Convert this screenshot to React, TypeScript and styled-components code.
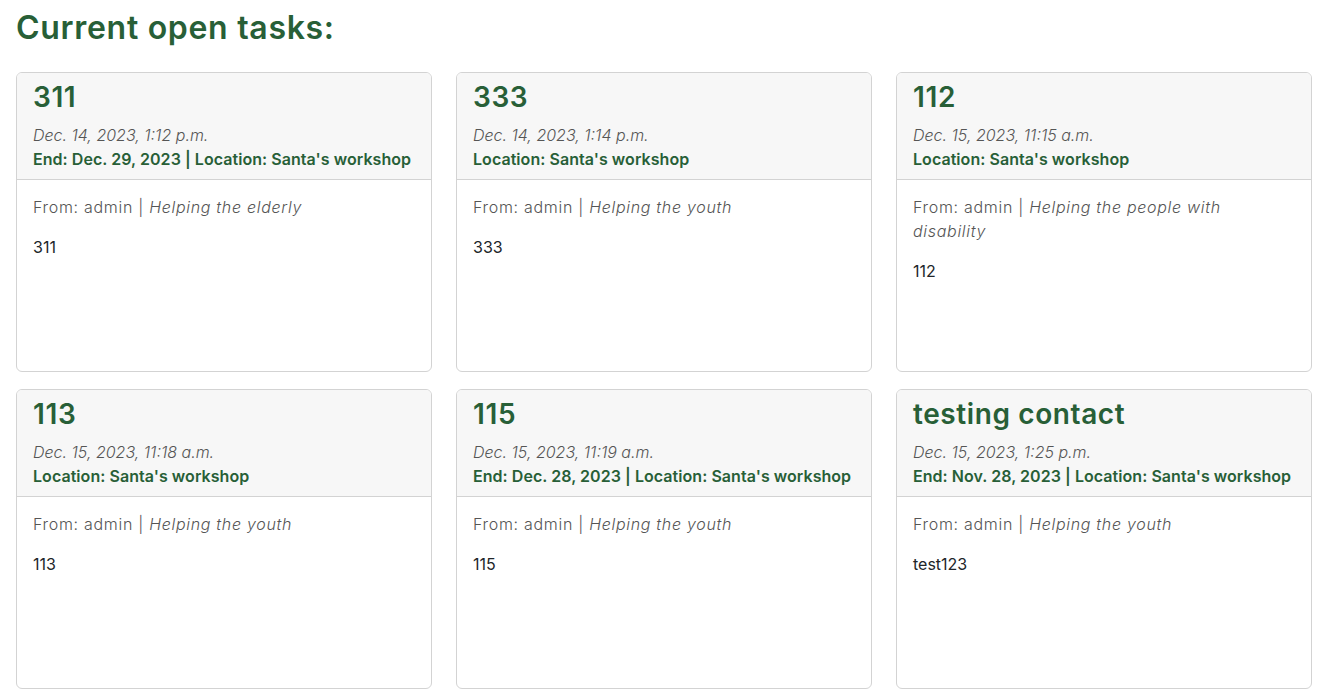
import React from "react";
import styled, { createGlobalStyle } from "styled-components";

const GlobalStyle = createGlobalStyle`
  html, body { margin: 0; padding: 0; background: #ffffff; }
  body { font-family: "Inter", "Liberation Sans", sans-serif; color: #212529; }
  * { box-sizing: border-box; }
`;

const Page = styled.main`
  padding: 8px 25px 16px 16px;
`;

const Heading = styled.h2`
  font-family: "Inter", "Liberation Sans", sans-serif;
  font-weight: 600;
  font-size: 32px;
  line-height: 1.2;
  letter-spacing: 0.7px;
  color: #285f37;
  margin: 1px 0 25px 0;
`;

const Grid = styled.div`
  display: grid;
  grid-template-columns: repeat(3, 1fr);
  column-gap: 24px;
  row-gap: 17px;
`;

const Card = styled.article`
  height: 300px;
  border: 1px solid #d3d3d3;
  border-radius: 6px;
  overflow: hidden;
  display: flex;
  flex-direction: column;
  background: #fff;
`;

const CardHeader = styled.header`
  background: #f7f7f7;
  border-bottom: 1px solid #d3d3d3;
  padding: 8px 16px 8px 16px;
`;

const Title = styled.h3`
  font-family: "Inter", "Liberation Sans", sans-serif;
  font-weight: 600;
  font-size: 28px;
  line-height: 1.2;
  letter-spacing: 0.6px;
  color: #285f37;
  margin: 0 0 8px 0;
`;

const DateLine = styled.div`
  font-size: 16px;
  line-height: 24px;
  font-style: italic;
  font-weight: 300;
  color: #555;
`;

const MetaLine = styled.div`
  font-size: 16px;
  line-height: 24px;
  font-weight: 600;
  letter-spacing: 0.05px;
  color: #285f37;
`;

const CardBody = styled.div`
  padding: 15px 16px 16px 16px;
  font-size: 16px;
  line-height: 24px;
`;

const FromLine = styled.p`
  margin: 0 0 16px 0;
  font-weight: 300;
  letter-spacing: 0.7px;
  color: #555;
`;

const Category = styled.em`
  font-style: italic;
`;

const Description = styled.p`
  margin: 0;
  font-weight: 400;
  color: #212529;
`;

type Task = {
  title: string;
  created: string;
  end?: string;
  location: string;
  from: string;
  category: string;
  description: string;
};

const tasks: Task[] = [
  { title: "311", created: "Dec. 14, 2023, 1:12 p.m.", end: "Dec. 29, 2023", location: "Santa's workshop", from: "admin", category: "Helping the elderly", description: "311" },
  { title: "333", created: "Dec. 14, 2023, 1:14 p.m.", location: "Santa's workshop", from: "admin", category: "Helping the youth", description: "333" },
  { title: "112", created: "Dec. 15, 2023, 11:15 a.m.", location: "Santa's workshop", from: "admin", category: "Helping the people with disability", description: "112" },
  { title: "113", created: "Dec. 15, 2023, 11:18 a.m.", location: "Santa's workshop", from: "admin", category: "Helping the youth", description: "113" },
  { title: "115", created: "Dec. 15, 2023, 11:19 a.m.", end: "Dec. 28, 2023", location: "Santa's workshop", from: "admin", category: "Helping the youth", description: "115" },
  { title: "testing contact", created: "Dec. 15, 2023, 1:25 p.m.", end: "Nov. 28, 2023", location: "Santa's workshop", from: "admin", category: "Helping the youth", description: "test123" },
];

export default function App() {
  return (
    <>
      <GlobalStyle />
      <Page>
        <Heading>Current open tasks:</Heading>
        <Grid>
          {tasks.map((t, i) => (
            <Card key={i}>
              <CardHeader>
                <Title>{t.title}</Title>
                <DateLine>{t.created}</DateLine>
                <MetaLine>
                  {t.end ? `End: ${t.end} | ` : ""}Location: {t.location}
                </MetaLine>
              </CardHeader>
              <CardBody>
                <FromLine>
                  From: {t.from} | <Category>{t.category}</Category>
                </FromLine>
                <Description>{t.description}</Description>
              </CardBody>
            </Card>
          ))}
        </Grid>
      </Page>
    </>
  );
}
